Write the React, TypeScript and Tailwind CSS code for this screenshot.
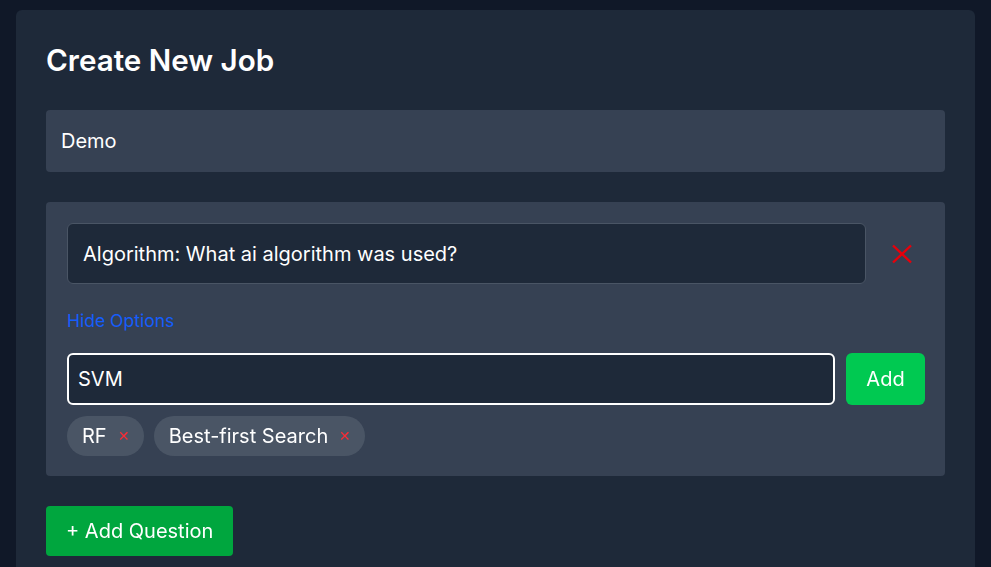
import { useState } from "react";

const font = { fontFamily: "Inter, 'Noto Sans', sans-serif" };

function RedX() {
  return (
    <svg width="20" height="20" viewBox="0 0 20 20" fill="none">
      <path d="M1 1.5 L19 18.5 M19 1.5 L1 18.5" stroke="#e7000b" strokeWidth="2.4" />
    </svg>
  );
}

function Tag({ label }: { label: string }) {
  return (
    <span className="flex items-center h-[40px] rounded-full bg-gray-600 pl-[15px] pr-[14px] text-xl text-white">
      {label}
      <span className="ml-[11px] text-sm text-red-500 leading-none">✕</span>
    </span>
  );
}

export default function App() {
  const [option, setOption] = useState("SVM");
  const tags = ["RF", "Best-first Search"];

  return (
    <div className="min-h-screen bg-gray-900 px-4 pt-[10px]" style={font}>
      <div className="rounded-md bg-gray-800 p-[30px] pb-[40px]">
        <h1 className="mt-[2px] text-[29.6px] leading-[36px] font-semibold text-white">Create New Job</h1>

        <div className="mt-[32px] flex items-center h-[62px] rounded bg-gray-700 px-[15px] text-xl text-white">
          Demo
        </div>

        <div className="mt-[30px] rounded bg-gray-700 pl-[21px] pr-[20px] pt-[21px] pb-[20px]">
          <div className="flex items-center gap-4">
            <div className="flex-1 flex items-center h-[61px] rounded-md border border-gray-600 bg-gray-800 px-[15px] text-xl text-white">
              Algorithm: What ai algorithm was used?
            </div>
            <button className="w-[40px] mr-[3px] flex justify-center">
              <RedX />
            </button>
          </div>

          <button className="mt-[25px] block text-[17.5px] leading-[24px] text-blue-600">Hide Options</button>

          <div className="mt-[20px] flex gap-[11px]">
            <input
              autoFocus
              value={option}
              onChange={(e) => setOption(e.target.value)}
              className="flex-1 h-[52px] rounded-md border-2 border-white bg-gray-800 px-[9px] text-xl text-white outline-none"
            />
            <button className="w-[79px] h-[52px] rounded-md bg-green-500 text-xl text-white">Add</button>
          </div>

          <div className="mt-[11px] flex gap-[10px]">
            {tags.map((t) => (
              <Tag key={t} label={t} />
            ))}
          </div>
        </div>

        <button className="mt-[30px] h-[50px] rounded bg-green-600 px-5 text-xl text-white">
          + Add Question
        </button>
      </div>
    </div>
  );
}
